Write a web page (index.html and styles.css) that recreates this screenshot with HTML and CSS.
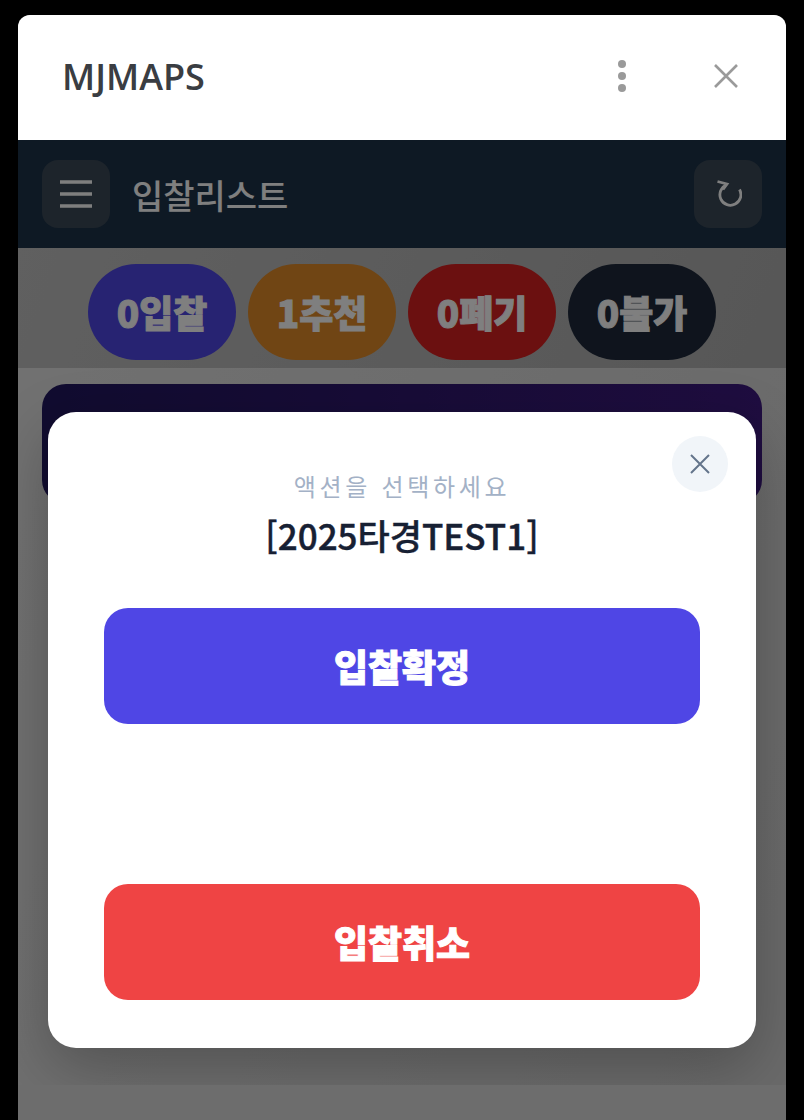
FILE: index.html

```html
<!DOCTYPE html>
<html lang="ko">
<head>
    <meta charset="UTF-8">
    <meta name="viewport" content="width=device-width, initial-scale=1.0">
    <title>MJMAPS</title>
    <link rel="stylesheet" href="styles.css">
</head>
<body>
    <div class="window">
        <header class="window-header">
            <div class="window-title">MJMAPS</div>
            <div class="window-actions">
                <svg class="icon-more" width="12" height="34" viewBox="0 0 12 34"><circle cx="6" cy="5" r="4"/><circle cx="6" cy="17" r="4"/><circle cx="6" cy="29" r="4"/></svg>
                <svg class="icon-close" width="26" height="26" viewBox="0 0 26 26"><path d="M2 2 L24 24 M24 2 L2 24"/></svg>
            </div>
        </header>
        <div class="stage">
            <div class="app-bar">
                <button class="bar-btn">
                    <svg class="icon-menu" width="34" height="30" viewBox="0 0 34 30"><path d="M1 3 H33 M1 15 H33 M1 27 H33"/></svg>
                </button>
                <div class="bar-title">입찰리스트</div>
                <button class="bar-btn bar-btn-right">
                    <svg class="icon-refresh" width="28" height="30" viewBox="0 0 28 30"><path d="M25.5 10.5 A10.5 10.5 0 1 1 12.5 6 M3.5 2.5 L13 5 L9 10.5"/></svg>
                </button>
            </div>
            <section class="content">
                <div class="chips">
                    <div class="chip chip-bid">0입찰</div>
                    <div class="chip chip-rec">1추천</div>
                    <div class="chip chip-drop">0폐기</div>
                    <div class="chip chip-no">0불가</div>
                </div>
                <div class="case-card"></div>
            </section>
            <div class="overlay"></div>
            <div class="modal">
                <button class="modal-close">
                    <svg width="22" height="22" viewBox="0 0 22 22"><path d="M2 2 L20 20 M20 2 L2 20"/></svg>
                </button>
                <div class="modal-sub">액션을 선택하세요</div>
                <div class="modal-title">[2025타경TEST1]</div>
                <div class="modal-buttons">
                    <button class="action action-confirm">입찰확정</button>
                    <button class="action action-cancel">입찰취소</button>
                </div>
            </div>
        </div>
        <div class="window-foot"></div>
    </div>
</body>
</html>
```

FILE: styles.css

```css
/* Base */
* {
    box-sizing: border-box;
}

html, body {
    height: 100%;
}

body {
    margin: 0;
    padding: 15px 18px 0;
    background-color: #000;
    font-family: "Noto Sans CJK KR", "Noto Sans", sans-serif;
    overflow: hidden;
}

button {
    border: none;
    font-family: inherit;
    padding: 0;
}

.window {
    display: flex;
    flex-direction: column;
    height: 1105px;
    border-radius: 12px 12px 0 0;
    overflow: hidden;
    background-color: #6d6d6d;
}

/* Window header */
.window-header {
    display: flex;
    justify-content: space-between;
    align-items: center;
    height: 125px;
    flex-shrink: 0;
    padding: 0 47px 3px 44px;
    background-color: #fff;
}

.window-title {
    font-family: "Open Sans", sans-serif;
    font-size: 36px;
    font-weight: 600;
    color: #3a3d42;
}

.window-actions {
    display: flex;
    align-items: center;
    gap: 85px;
}

.icon-more {
    fill: #9a9a9a;
}

.icon-close path {
    stroke: #9a9a9a;
    stroke-width: 2.6;
    fill: none;
}

/* Dimmed app underneath */
.stage {
    position: relative;
    height: 945px;
    flex-shrink: 0;
    overflow: hidden;
    background: linear-gradient(110deg, #e4e4e4, #d4d4d4);
}

.app-bar {
    display: flex;
    align-items: center;
    height: 108px;
    padding: 0 24px;
    background-color: #1c3248;
}

.bar-btn {
    display: flex;
    justify-content: center;
    align-items: center;
    width: 68px;
    height: 68px;
    border-radius: 16px;
    background-color: #3a4856;
}

.bar-btn-right {
    margin-left: auto;
}

.icon-menu path {
    stroke: #fff;
    stroke-width: 3.6;
    fill: none;
}

.icon-refresh path {
    stroke: #fff;
    stroke-width: 2.8;
    fill: none;
}

.bar-title {
    margin-left: 22px;
    font-size: 34px;
    font-weight: 500;
    color: #fff;
}

.chips {
    display: flex;
    justify-content: center;
    gap: 12px;
    padding: 16px 0 8px;
    background: linear-gradient(110deg, #c0c0c0, #aeaeae);
}

.chip {
    display: flex;
    justify-content: center;
    align-items: center;
    width: 148px;
    height: 96px;
    border-radius: 48px;
    font-size: 37px;
    font-weight: 900;
    color: #fff;
    -webkit-text-stroke: 1px #fff;
}

.chip-bid {
    background-color: #4f46e5;
}

.chip-rec {
    background-color: #e08a28;
}

.chip-drop {
    background-color: #d62020;
}

.chip-no {
    background-color: #1e293b;
}

.case-card {
    height: 120px;
    margin: 16px 24px 0;
    border-radius: 24px;
    background: linear-gradient(90deg, #221860, #3e1a80);
}

.overlay {
    position: absolute;
    inset: 0;
    background-color: rgba(0, 0, 0, 0.5);
}

/* Action modal, its shadow stops at the list area */
.modal {
    position: absolute;
    top: 272px;
    left: 30px;
    width: 708px;
    height: 636px;
    padding: 56px 56px 0;
    border-radius: 28px;
    background-color: #fff;
    box-shadow: 0 20px 60px rgba(0, 0, 0, 0.25);
    clip-path: inset(-44px -30px -37px -30px);
    text-align: center;
}

.modal-close {
    position: absolute;
    top: 24px;
    right: 28px;
    display: flex;
    justify-content: center;
    align-items: center;
    width: 56px;
    height: 56px;
    border-radius: 50%;
    background-color: #f1f5f9;
}

.modal-close path {
    stroke: #64748b;
    stroke-width: 2;
    fill: none;
}

.modal-sub {
    font-size: 24px;
    line-height: 36px;
    letter-spacing: 3.7px;
    color: #a3b1c6;
}

.modal-title {
    margin-top: 9px;
    font-size: 35px;
    line-height: 44px;
    font-weight: 500;
    color: #172033;
    -webkit-text-stroke: 0.4px #172033;
}

.modal-buttons {
    display: flex;
    flex-direction: column;
    gap: 160px;
    margin-top: 51px;
}

.action {
    height: 116px;
    border-radius: 24px;
    font-size: 37px;
    font-weight: 900;
    color: #fff;
    -webkit-text-stroke: 1px #fff;
}

.action-confirm {
    background-color: #4f46e5;
}

.action-cancel {
    background-color: #ef4444;
}
```
